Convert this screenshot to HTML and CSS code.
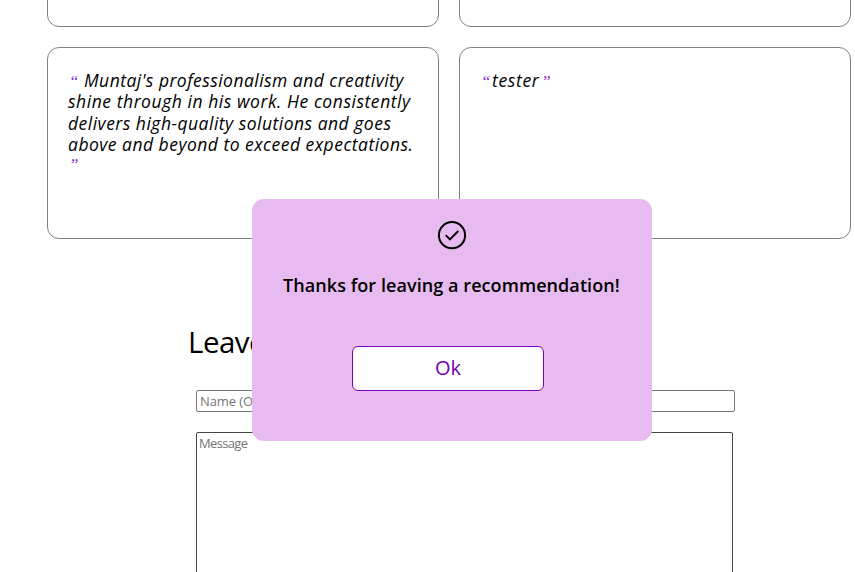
FILE: index.html
```html
<!DOCTYPE html>
<html lang="en">
<head>
<meta charset="utf-8">
<title>Recommendations</title>
<link rel="stylesheet" href="styles.css">
</head>
<body>
<main>
  <section class="recommendations">
    <article class="card"></article>
    <article class="card"></article>
    <article class="card">
      <p class="line first"><span class="quote lead">“</span>Muntaj's professionalism and creativity</p>
      <p class="line second">shine through in his work. He consistently</p>
      <p class="line third">delivers high-quality solutions and goes</p>
      <p class="line fourth">above and beyond to exceed expectations.</p>
      <p class="line last"><span class="quote">”</span></p>
    </article>
    <article class="card">
      <p class="line short"><span class="quote open">“</span>tester<span class="quote close">”</span></p>
    </article>
  </section>
  <form class="form">
    <h2>Leave a Recommendation</h2>
    <input type="text" placeholder="Name (Optional)">
    <textarea placeholder="Message"></textarea>
  </form>
</main>
<div class="popup">
  <svg class="check" viewBox="0 0 30 30" width="30" height="30" fill="none" stroke="#000" stroke-width="2"><circle cx="15" cy="15.2" r="13.1"/><path d="M8.7 15.1l4.2 4.3 8.4-8.4"/></svg>
  <h3>Thanks for leaving a recommendation!</h3>
  <button type="button">Ok</button>
</div>
</body>
</html>
```
FILE: styles.css
```css
* { box-sizing: border-box; }
body {
  margin: 0;
  height: 572px;
  overflow: hidden;
  background: #fff;
  color: #000;
  font-family: "Trebuchet MS", "Open Sans", sans-serif;
}
main { height: 572px; overflow: hidden; }
.recommendations {
  display: grid;
  grid-template-columns: 392px 392px;
  grid-template-rows: 192px 192px;
  gap: 20px;
  margin: -165px 0 0 47px;
}
.card {
  border: 1px solid #808080;
  border-radius: 12px;
  padding: 22px 20px;
}
.line {
  margin: 0;
  height: 21.3px;
  line-height: 21.3px;
  font-size: 17.5px;
  font-style: italic;
  white-space: nowrap;
}
.first { letter-spacing: 0.46px; }
.second { letter-spacing: 0.55px; }
.third { letter-spacing: 0.49px; }
.fourth { letter-spacing: 0.48px; }
.last { margin-top: -2px; }
.short { letter-spacing: 0.65px; }
.quote {
  display: inline-block;
  padding-left: 1px;
  color: #8a2bc9;
  font-family: "Liberation Serif", serif;
  font-size: 17px;
  letter-spacing: 0;
}
.lead { width: 16px; }
.open { width: 12px; }
.close { padding-left: 2px; }
.form { margin: 83px 0 0 188px; }
h2 {
  margin: 0 0 28px;
  height: 40px;
  line-height: 40px;
  font-size: 29.5px;
  font-weight: 400;
  letter-spacing: -0.5px;
}
input, textarea {
  display: block;
  margin: 0 0 0 8px;
  font-family: inherit;
  font-size: 13px;
  border-radius: 2px;
  outline: 0;
}
input {
  width: 539px;
  height: 22px;
  padding: 1px 3px;
  border: 1px solid #767676;
  letter-spacing: -0.1px;
}
textarea {
  width: 537px;
  height: 180px;
  margin-top: 20px;
  padding: 1px 2px;
  border: 1px solid #454545;
  letter-spacing: -0.65px;
  resize: none;
}
::placeholder { color: #757575; }
.popup {
  position: absolute;
  left: 252px;
  top: 199px;
  width: 400px;
  height: 242px;
  padding-top: 21px;
  border-radius: 12px;
  background: #e8bbf0;
}
.check { display: block; margin: 0 auto; }
h3 {
  margin: 21px 0 47px 31px;
  height: 28px;
  line-height: 28px;
  font-size: 18px;
  font-weight: 600;
  letter-spacing: 0.07px;
  white-space: nowrap;
}
button {
  display: block;
  width: 192px;
  height: 45px;
  margin: 0 0 0 100px;
  padding: 0 0 2px;
  border: 1px solid #7d00b8;
  border-radius: 6px;
  background: #fff;
  color: #7400b4;
  font-family: inherit;
  font-size: 20px;
}
```
